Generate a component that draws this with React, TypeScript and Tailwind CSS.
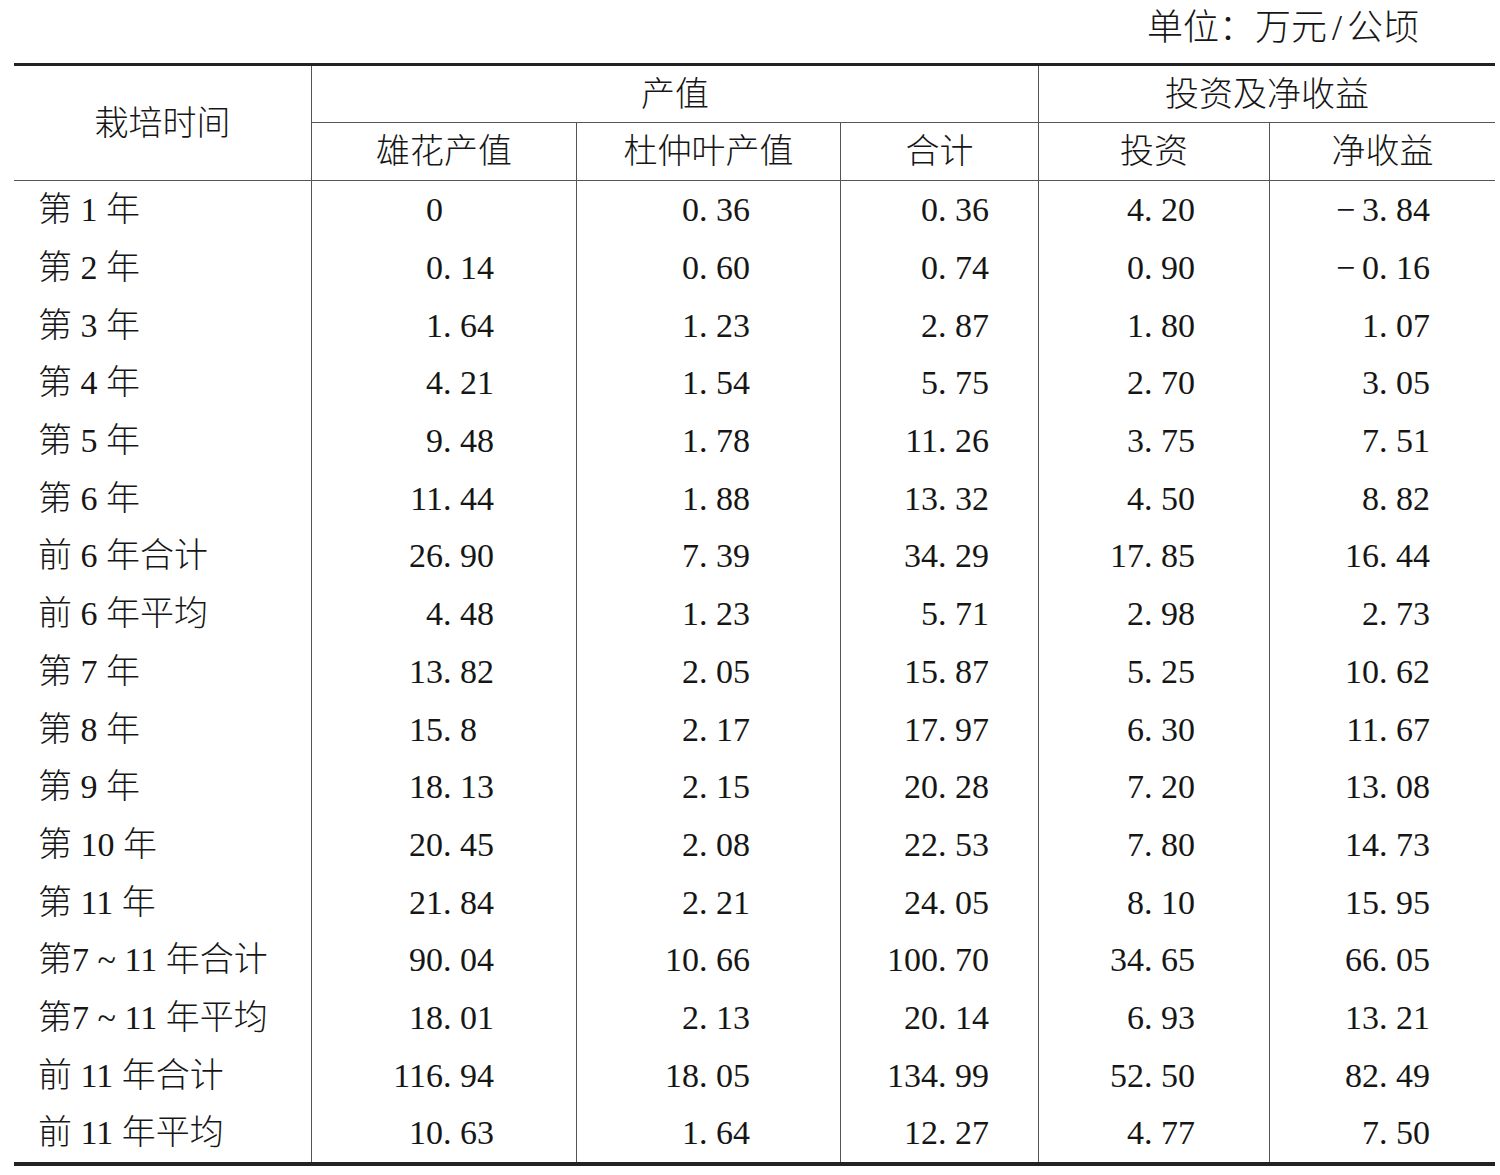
import React from "react";

const rows: string[][] = [
  ["第 1 年", "0", "0.36", "0.36", "4.20", "-3.84"],
  ["第 2 年", "0.14", "0.60", "0.74", "0.90", "-0.16"],
  ["第 3 年", "1.64", "1.23", "2.87", "1.80", "1.07"],
  ["第 4 年", "4.21", "1.54", "5.75", "2.70", "3.05"],
  ["第 5 年", "9.48", "1.78", "11.26", "3.75", "7.51"],
  ["第 6 年", "11.44", "1.88", "13.32", "4.50", "8.82"],
  ["前 6 年合计", "26.90", "7.39", "34.29", "17.85", "16.44"],
  ["前 6 年平均", "4.48", "1.23", "5.71", "2.98", "2.73"],
  ["第 7 年", "13.82", "2.05", "15.87", "5.25", "10.62"],
  ["第 8 年", "15.8", "2.17", "17.97", "6.30", "11.67"],
  ["第 9 年", "18.13", "2.15", "20.28", "7.20", "13.08"],
  ["第 10 年", "20.45", "2.08", "22.53", "7.80", "14.73"],
  ["第 11 年", "21.84", "2.21", "24.05", "8.10", "15.95"],
  ["第7 ~ 11 年合计", "90.04", "10.66", "100.70", "34.65", "66.05"],
  ["第7 ~ 11 年平均", "18.01", "2.13", "20.14", "6.93", "13.21"],
  ["前 11 年合计", "116.94", "18.05", "134.99", "52.50", "82.49"],
  ["前 11 年平均", "10.63", "1.64", "12.27", "4.77", "7.50"],
];

// left padding per numeric column so the decimal points line up like the print
const padCls = ["pl-[71px]", "pl-[62px]", "pl-[37px]", "pl-[45px]", "pl-[49px]"];

function Num({ v }: { v: string }) {
  const neg = v.startsWith("-");
  const [int, frac] = (neg ? v.slice(1) : v).split(".");
  return (
    <>
      <span className="inline-block w-[60px] text-right">
        {neg ? `−\u2009${int}` : int}
      </span>
      {frac !== undefined && <span>{`. ${frac}`}</span>}
    </>
  );
}

export default function App() {
  return (
    <div
      className="w-[1500px] h-[1175px] bg-white text-[#161616] text-[34px] font-light"
      style={{ fontFamily: '"Liberation Serif", "Noto Sans CJK SC", serif' }}
    >
      <div className="h-[63px] leading-[56px] text-right pr-[81px] text-[36px] whitespace-pre">
        单位：万元<span className="px-[5px]">/</span>公顷
      </div>
      <div className="pl-[14px]">
        <table className="table-fixed w-[1481px] border-separate border-spacing-0 border-t-[3px] border-b-[4px] border-[#222]">
          <colgroup>
            <col className="w-[298px]" />
            <col className="w-[265px]" />
            <col className="w-[264px]" />
            <col className="w-[198px]" />
            <col className="w-[231px]" />
            <col className="w-[225px]" />
          </colgroup>
          <thead>
            <tr className="h-[57px]">
              <th rowSpan={2} className="font-light border-r border-b border-[#555] align-middle">
                栽培时间
              </th>
              <th colSpan={3} className="font-light border-r border-b border-[#555]">
                产值
              </th>
              <th colSpan={2} className="font-light border-b border-[#555]">
                投资及净收益
              </th>
            </tr>
            <tr className="h-[58px]">
              <th className="font-light border-r border-b border-[#555]">雄花产值</th>
              <th className="font-light border-r border-b border-[#555]">杜仲叶产值</th>
              <th className="font-light border-r border-b border-[#555]">合计</th>
              <th className="font-light border-r border-b border-[#555]">投资</th>
              <th className="font-light border-b border-[#555]">净收益</th>
            </tr>
          </thead>
          <tbody>
            {rows.map((r, i) => (
              <tr key={i} className="h-[57.7px]">
                <td className="pl-[24px] border-r border-[#555] whitespace-pre">{r[0]}</td>
                {r.slice(1).map((v, j) => (
                  <td
                    key={j}
                    className={`${padCls[j]} whitespace-pre ${j < 4 ? "border-r border-[#555]" : ""}`}
                  >
                    <Num v={v} />
                  </td>
                ))}
              </tr>
            ))}
          </tbody>
        </table>
      </div>
    </div>
  );
}
